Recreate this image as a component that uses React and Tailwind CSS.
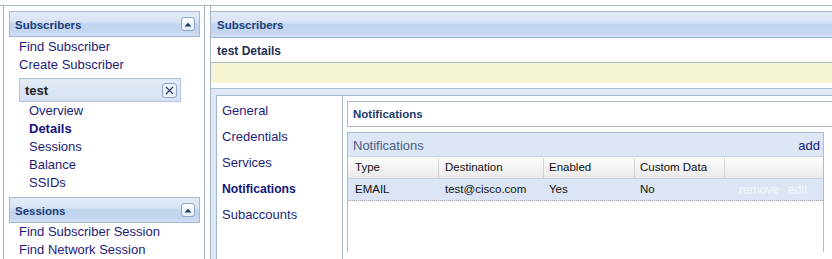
import React from "react";

function CollapseBtn() {
  return (
    <div className="flex h-[14px] w-[14px] items-center justify-center rounded-[3px] border border-[#8ea5c6] bg-[linear-gradient(#ffffff,#e4ecf7)]">
      <svg width="8" height="5" viewBox="0 0 8 5">
        <path d="M0.5 4.5 L4 0.8 L7.5 4.5 Z" fill="#1e3a6a" />
      </svg>
    </div>
  );
}

function CloseBtn() {
  return (
    <div className="flex h-[15px] w-[15px] items-center justify-center rounded-[3px] border border-[#8ea5c6] bg-[#eef3fa]">
      <svg width="9" height="9" viewBox="0 0 9 9">
        <path d="M1 1 L8 8 M8 1 L1 8" stroke="#2a3f66" strokeWidth="1.2" fill="none" />
      </svg>
    </div>
  );
}

function LeftHeader({ title }) {
  return (
    <div className="flex h-[26px] items-center justify-between border border-[#a6b9d2] border-b-[#9db3d8] bg-[linear-gradient(#e2eaf7,#d8e4f5_40%,#c2d4ef_50%,#c5d6f0_85%,#d4e1f4)] pl-[5px] pr-[4px]">
      <span className="pt-[3px] text-[11.5px] font-bold text-[#1d3e74]">{title}</span>
      <CollapseBtn />
    </div>
  );
}

const link = "h-[18px] leading-[18px] text-[13px] text-[#1c1c78]";

export default function App() {
  return (
    <div className="h-[259px] w-[832px] overflow-hidden bg-white pt-[5px] font-['Liberation_Sans',Arial,sans-serif]">
      <div className="flex h-full border-t border-[#a9b8c6]">
        {/* Left column */}
        <div className="ml-[3px] w-[202px] shrink-0 border-x border-[#a9b8c6] pl-[5px] pr-[4px] pt-[5px]">
          <LeftHeader title="Subscribers" />
          <div className="pl-[10px] pt-[1px]">
            <div className={link}>Find Subscriber</div>
            <div className={link}>Create Subscriber</div>
          </div>
          <div className="ml-[10px] mr-[19px] mt-[4px] flex h-[24px] items-center justify-between border border-[#b3c5dc] bg-[linear-gradient(#e3ebf7,#d5e1f3)] pl-[5px] pr-[3px]">
            <span className="pt-[1px] text-[13px] font-bold text-[#222]">test</span>
            <CloseBtn />
          </div>
          <div className="pl-[20px]">
            <div className={link}>Overview</div>
            <div className={link + " font-bold text-[#14147a]"}>Details</div>
            <div className={link}>Sessions</div>
            <div className={link}>Balance</div>
            <div className={link}>SSIDs</div>
          </div>
          <div className="mt-[5px]">
            <LeftHeader title="Sessions" />
          </div>
          <div className="pl-[10px]">
            <div className={link}>Find Subscriber Session</div>
            <div className={link}>Find Network Session</div>
          </div>
        </div>

        {/* Right column */}
        <div className="ml-[5px] flex-1 border-l border-[#a9b8c6] pt-[5px]">
          <div className="flex h-[27px] items-center border-t border-b border-[#a9b9c9] border-b-[#9cb3da] bg-[linear-gradient(#e2eaf7,#d8e4f5_40%,#c2d4ef_50%,#c5d6f0_85%,#d4e1f4)] pl-[6px]">
            <span className="pt-[3px] text-[11.5px] font-bold text-[#1d3e74]">Subscribers</span>
          </div>
          <div className="flex h-[25px] items-center border-b border-[#a9b9c9] bg-white pl-[6px]">
            <span className="pt-[2px] text-[12px] font-bold text-[#1f3050]">test Details</span>
          </div>
          <div className="h-[20px] bg-[#f5f5d3]" />
          <div className="mt-[5px] h-[200px] border-t border-[#a9bccd] bg-[#dfe8f6] pl-[5px] pt-[6px]">
            <div className="flex h-full border-l border-t border-[#a5b8cc] bg-white">
              {/* tabs */}
              <div className="w-[126px] shrink-0 border-r border-[#a5b8cc] pl-[5px] pt-[2px]">
                {["General", "Credentials", "Services", "Notifications", "Subaccounts"].map((t) => (
                  <div
                    key={t}
                    className={
                      t === "Notifications"
                        ? "h-[26px] leading-[26px] text-[12.2px] font-bold text-[#14147a]"
                        : "h-[26px] leading-[26px] text-[13px] text-[#1e1e7c]"
                    }
                  >
                    {t}
                  </div>
                ))}
              </div>
              {/* content */}
              <div className="flex-1 pl-[4px] pt-[5px]">
                <div className="flex h-[26px] items-center border-y border-l border-[#a8bbd0] bg-white pl-[5px]">
                  <span className="pt-[2px] text-[11.5px] font-bold text-[#1c3a6e]">Notifications</span>
                </div>
                <div className="mr-[8px] mt-[5px] h-[120px] border-x border-t border-[#a8bcd4] bg-white">
                  <div className="flex h-[23px] items-center justify-between bg-[#dce6f5] pl-[5px] pr-[3px] pt-[2px]">
                    <span className="text-[13px] text-[#4a5f80]">Notifications</span>
                    <span className="text-[13px] text-[#20207c]">add</span>
                  </div>
                  <div className="flex h-[23px] border-y border-[#c9d3df] bg-[linear-gradient(#ffffff,#f4f4f4_50%,#e9e9e9)] pt-[1px] text-[11.5px] text-[#111]">
                    <div className="flex w-[91px] items-center border-r border-[#d2d2d2] pl-[7px]">Type</div>
                    <div className="flex w-[105px] items-center border-r border-[#d2d2d2] pl-[6px]">Destination</div>
                    <div className="flex w-[91px] items-center border-r border-[#d2d2d2] pl-[5px]">Enabled</div>
                    <div className="flex w-[90px] items-center border-r border-[#d2d2d2] pl-[5px]">Custom Data</div>
                    <div className="flex-1" />
                  </div>
                  <div className="flex h-[22px] border-b border-dotted border-[#a0a6b0] bg-[#dbe5f5] pt-[1px] text-[11.5px] text-[#111]">
                    <div className="flex w-[91px] items-center pl-[7px]">EMAIL</div>
                    <div className="flex w-[105px] items-center pl-[6px]">test@cisco.com</div>
                    <div className="flex w-[91px] items-center pl-[5px]">Yes</div>
                    <div className="flex w-[90px] items-center pl-[5px]">No</div>
                    <div className="flex flex-1 items-center gap-[9px] pl-[14px] text-[12px] text-[#f3f6fb]">
                      <span>remove</span>
                      <span>edit</span>
                    </div>
                  </div>
                </div>
              </div>
            </div>
          </div>
        </div>
      </div>
    </div>
  );
}
